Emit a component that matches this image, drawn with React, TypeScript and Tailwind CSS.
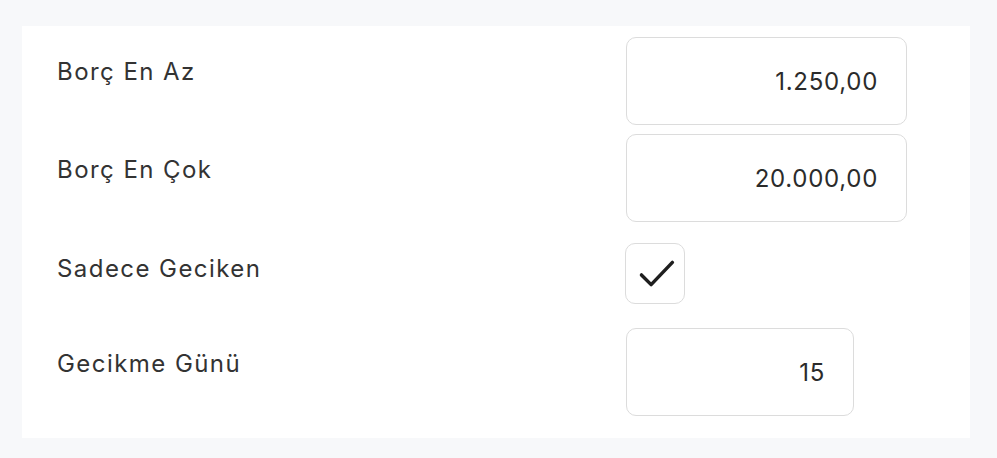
export default function App() {
  const inputCls =
    "h-[88px] rounded-[10px] border-[1.5px] border-[#dcdcdc] bg-white pr-[28px] text-right text-[24px] tracking-[0.03em] text-[#2b2b2b] outline-none";
  const labelCls = "w-[569px] text-[24px] leading-[30px] tracking-[0.06em] text-[#333]";

  return (
    <div className="min-h-[458px] bg-[#f7f8fa] pt-[26px] pl-[22px] pr-[27px] pb-[21px] font-['Inter',sans-serif]">
      <div className="bg-white pl-[35px] pt-[11px] pb-[22px]">
        <div className="flex flex-col gap-[9px]">
          <div className="flex">
            <label className={labelCls + " pt-[20px]"}>Borç En Az</label>
            <input className={inputCls + " w-[281px]"} defaultValue="1.250,00" />
          </div>
          <div className="flex">
            <label className={labelCls + " pt-[21px]"}>Borç En Çok</label>
            <input className={inputCls + " w-[281px]"} defaultValue="20.000,00" />
          </div>
          <div className="flex h-[88px]">
            <label className={labelCls + " pt-[23px]"}>Sadece Geciken</label>
            <div className="flex items-center pb-[3px]">
              <div className="-ml-px h-[61px] w-[60px] rounded-[10px] border-[1.5px] border-[#dcdcdc] bg-white">
                <svg viewBox="0 0 60 61" className="h-full w-full">
                  <polyline
                    points="16,32 26,42 48,19"
                    fill="none"
                    stroke="#1f1f1f"
                    strokeWidth="3.6"
                    strokeLinecap="round"
                    strokeLinejoin="round"
                  />
                </svg>
              </div>
            </div>
          </div>
          <div className="flex">
            <label className={labelCls + " pt-[21px]"}>Gecikme Günü</label>
            <input className={inputCls + " w-[228px]"} defaultValue="15" />
          </div>
        </div>
      </div>
    </div>
  );
}
